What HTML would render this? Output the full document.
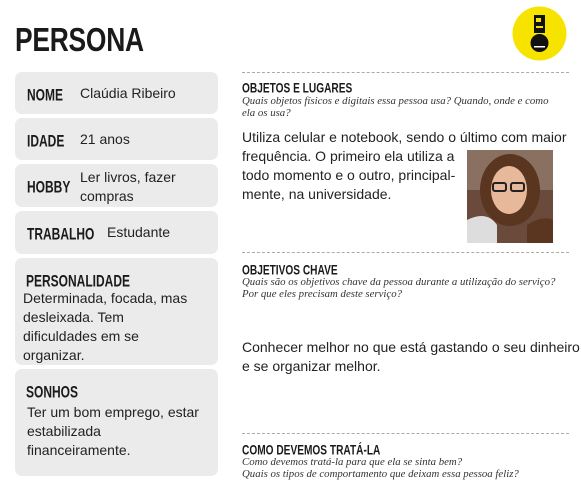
<!DOCTYPE html>
<html><head><meta charset="utf-8"><style>
*{margin:0;padding:0;box-sizing:border-box}
body{width:581px;height:486px;background:#fff;position:relative;overflow:hidden;font-family:"Liberation Sans",sans-serif;color:#222}
.a{position:absolute}
.box{position:absolute;left:15px;width:203px;background:#ebebeb;border-radius:7px}
.lab{position:absolute;font-family:"Liberation Sans Narrow","Liberation Sans",sans-serif;font-weight:bold;font-size:15px;color:#1a1a1a;transform:scale(0.8,1.12);transform-origin:left top;white-space:nowrap}
.t{position:absolute;font-size:14px;line-height:19px;color:#222}
.h{position:absolute;left:242px;font-family:"Liberation Sans Narrow","Liberation Sans",sans-serif;font-weight:bold;font-size:13px;color:#1a1a1a;transform:scale(0.78,1.05);transform-origin:left top;white-space:nowrap}
.q{position:absolute;left:242px;font-family:"Liberation Serif",serif;font-style:italic;font-size:10.8px;line-height:12px;color:#333}
.dash{position:absolute;left:242px;width:327px;border-top:1px dashed #aaa}
</style></head><body>
<div class="a" style="left:15px;top:21px;font-family:'Liberation Sans Narrow','Liberation Sans',sans-serif;font-weight:bold;font-size:33px;color:#1a1a1a;transform:scale(0.8,1.0);transform-origin:left top;letter-spacing:-0.3px">PERSONA</div>
<svg class="a" style="left:511px;top:5px" width="57" height="57" viewBox="0 0 57 57">
<circle cx="28.5" cy="28.5" r="27" fill="#f6e400"/>
<rect x="23" y="10" width="11" height="18" fill="#111"/>
<rect x="25" y="13" width="5" height="4" fill="#f6e400"/>
<rect x="25" y="21" width="7" height="2" fill="#f6e400"/>
<circle cx="28.5" cy="38" r="9" fill="#111"/>
<rect x="23" y="41" width="11" height="1.5" fill="#fff"/>
</svg>
<div class="box" style="top:72px;height:42px"></div>
<div class="lab" style="left:27px;top:86px">NOME</div>
<div class="t" style="left:80px;top:84px">Claúdia Ribeiro</div>
<div class="box" style="top:118px;height:42px"></div>
<div class="lab" style="left:27px;top:132px">IDADE</div>
<div class="t" style="left:80px;top:130px">21 anos</div>
<div class="box" style="top:164px;height:43px"></div>
<div class="lab" style="left:27px;top:178px">HOBBY</div>
<div class="t" style="left:80px;top:168px">Ler livros, fazer<br>compras</div>
<div class="box" style="top:211px;height:43px"></div>
<div class="lab" style="left:27px;top:225px">TRABALHO</div>
<div class="t" style="left:107px;top:223px">Estudante</div>
<div class="box" style="top:258px;height:107px"></div>
<div class="lab" style="left:26px;top:272px">PERSONALIDADE</div>
<div class="t" style="left:23px;top:289px">Determinada, focada, mas<br>desleixada. Tem<br>dificuldades em se<br>organizar.</div>
<div class="box" style="top:369px;height:107px"></div>
<div class="lab" style="left:26px;top:383px">SONHOS</div>
<div class="t" style="left:27px;top:403px">Ter um bom emprego, estar<br>estabilizada<br>financeiramente.</div>

<div class="dash" style="top:72px"></div>
<div class="h" style="top:80px">OBJETOS E LUGARES</div>
<div class="q" style="top:95px">Quais objetos físicos e digitais essa pessoa usa? Quando, onde e como<br>ela os usa?</div>
<div class="t" style="left:242px;top:128px;line-height:19px">Utiliza celular e notebook, sendo o último com maior<br>frequência. O primeiro ela utiliza a<br>todo momento e o outro, principal-<br>mente, na universidade.</div>
<svg class="a" style="left:467px;top:150px" width="86" height="93" viewBox="0 0 86 93">
<rect width="86" height="93" fill="#6a4a3a"/>
<rect x="0" y="0" width="86" height="40" fill="#8a7060"/>
<ellipse cx="43" cy="40" rx="30" ry="36" fill="#5a3520"/>
<ellipse cx="42" cy="40" rx="18" ry="24" fill="#e8b89a"/>
<rect x="26" y="33" width="13" height="8" rx="2" fill="none" stroke="#222" stroke-width="2"/>
<rect x="44" y="33" width="13" height="8" rx="2" fill="none" stroke="#222" stroke-width="2"/>
<path d="M0 70 Q20 60 30 75 L30 93 L0 93Z" fill="#ddd"/>
<path d="M60 75 Q75 65 86 70 L86 93 L60 93Z" fill="#5a3520"/>
</svg>
<div class="dash" style="top:252px"></div>
<div class="h" style="top:262px">OBJETIVOS CHAVE</div>
<div class="q" style="top:276px">Quais são os objetivos chave da pessoa durante a utilização do serviço?<br>Por que eles precisam deste serviço?</div>
<div class="t" style="left:242px;top:338px">Conhecer melhor no que está gastando o seu dinheiro<br>e se organizar melhor.</div>
<div class="dash" style="top:433px"></div>
<div class="h" style="top:442px">COMO DEVEMOS TRATÁ-LA</div>
<div class="q" style="top:456px">Como devemos tratá-la para que ela se sinta bem?<br>Quais os tipos de comportamento que deixam essa pessoa feliz?</div>
</body></html>
